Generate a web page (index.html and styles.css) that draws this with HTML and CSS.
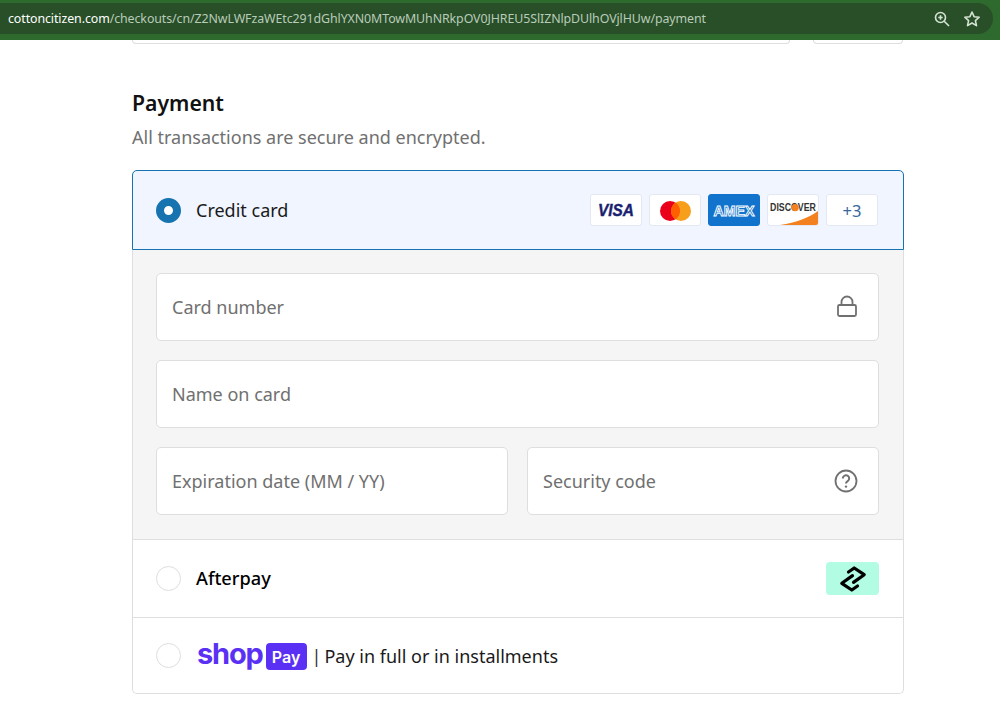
FILE: index.html
```html
<!DOCTYPE html>
<html lang="en">
<head>
    <title>Payment</title>
    <meta charset="utf-8">
    <link rel="stylesheet" href="styles.css">
</head>
<body>
    <header class="browser">
        <div class="urlbar">
            <p class="url"><span class="domain">cottoncitizen.com</span>/checkouts/cn/Z2NwLWFzaWEtc291dGhlYXN0MTowMUhNRkpOV0JHREU5SlIZNlpDUlhOVjlHUw/payment</p>
            <svg class="barIcon" width="18" height="18" viewBox="0 0 18 18" fill="none" stroke="#d5e3d5" stroke-width="1.6">
                <circle cx="7.5" cy="7.5" r="5"/>
                <path d="M11.2 11.2L16 16M5.3 7.5h4.4M7.5 5.3v4.4"/>
            </svg>
            <svg class="barIcon" width="18" height="18" viewBox="0 0 18 18" fill="none" stroke="#d5e3d5" stroke-width="1.6" stroke-linejoin="round">
                <path d="M9 2l2.1 4.7 5.1.5-3.8 3.4 1.1 5L9 13l-4.5 2.6 1.1-5-3.8-3.4 5.1-.5z"/>
            </svg>
        </div>
    </header>

    <main class="page">
        <div class="leftover">
            <div class="leftoverField"></div>
            <div class="leftoverBtn"></div>
        </div>

        <h2 class="title">Payment</h2>
        <p class="subtitle">All transactions are secure and encrypted.</p>

        <section class="methods">
            <div class="method selected">
                <span class="radio on"></span>
                <span class="methodName">Credit card</span>
                <div class="cards">
                    <div class="card">
                        <svg width="50" height="30" viewBox="0 0 50 30"><text x="25" y="21" class="visaText" text-anchor="middle" textLength="36" lengthAdjust="spacingAndGlyphs">VISA</text></svg>
                    </div>
                    <div class="card">
                        <svg width="50" height="30" viewBox="0 0 50 30">
                            <circle cx="20" cy="16" r="10" fill="#eb001b"/>
                            <circle cx="31" cy="16" r="10" fill="#f79e1b"/>
                            <path d="M25.5 7.6a10 10 0 0 1 0 16.8a10 10 0 0 1 0-16.8z" fill="#ff5f00"/>
                        </svg>
                    </div>
                    <div class="card amex">
                        <svg width="50" height="30" viewBox="0 0 50 30"><text x="25" y="20.5" class="amexText" text-anchor="middle" textLength="41" lengthAdjust="spacingAndGlyphs">AMEX</text></svg>
                    </div>
                    <div class="card">
                        <svg width="50" height="30" viewBox="0 0 50 30">
                            <path d="M12 30C28 28 42 22 50 16v14z" fill="#f48120"/>
                            <text class="discText" text-anchor="middle" transform="translate(25 16) scale(1 1.15)">DISCOVER</text>
                            <circle cx="27.2" cy="12.6" r="3.6" fill="#f48120"/>
                        </svg>
                    </div>
                    <div class="card more">+3</div>
                </div>
            </div>

            <div class="fields">
                <div class="field">
                    <span>Card number</span>
                    <svg width="22" height="24" viewBox="0 0 22 24" fill="none" stroke="#707070" stroke-width="1.8">
                        <rect x="2" y="10" width="18" height="11" rx="1.5"/>
                        <path d="M5.5 10V7a5.5 5.5 0 0 1 11 0v3"/>
                    </svg>
                </div>
                <div class="field"><span>Name on card</span></div>
                <div class="fieldRow">
                    <div class="field"><span>Expiration date (MM / YY)</span></div>
                    <div class="field">
                        <span>Security code</span>
                        <svg width="24" height="24" viewBox="0 0 24 24" fill="none" stroke="#707070" stroke-width="1.8">
                            <circle cx="12" cy="12" r="10.5"/>
                            <path d="M8.8 9.5a3.2 3.2 0 1 1 4.9 2.7c-1.1.7-1.7 1.2-1.7 2.4" stroke-width="2"/>
                            <circle cx="12" cy="17.6" r="1.2" fill="#707070" stroke="none"/>
                        </svg>
                    </div>
                </div>
            </div>

            <div class="method">
                <span class="radio"></span>
                <span class="methodName strong">Afterpay</span>
                <div class="afterpay">
                    <svg width="30" height="26" viewBox="0 0 30 26" fill="none" stroke="#000" stroke-width="3.2" stroke-linejoin="round" stroke-linecap="round">
                        <path d="M10.5 6L16.2 2L26.2 8.7L15.5 16.4"/>
                        <path d="M19.5 20L13.8 24L3.8 17.3L14.5 9.6"/>
                    </svg>
                </div>
            </div>

            <div class="method last">
                <span class="radio"></span>
                <span class="shopWord">shop</span>
                <span class="payBadge">Pay</span>
                <span class="sep">|</span>
                <span class="shopText">Pay in full or in installments</span>
            </div>
        </section>
    </main>
</body>
</html>
```

FILE: styles.css
```css
* {
    box-sizing: border-box;
    font-family: "Noto Sans", "Open Sans", sans-serif;
}
html, body {
    height: 100%;
}
body {
    margin: 0px;
    padding: 0px;
    background: #fff;
    color: #111;
    overflow: hidden;
}

/* browser bar */
.browser {
    height: 40px;
    padding: 3px 7px 6px 0px;
    background: #2e6a2e;
}
.urlbar {
    height: 31px;
    padding: 0px 12px 0px 8px;
    display: flex;
    align-items: center;
    gap: 12px;
    background: #284f28;
    border-radius: 0px 16px 16px 0px;
}
.url {
    flex: 1;
    margin: 0px;
    font-size: 12.4px;
    letter-spacing: -0.09px;
    color: #b9cbb9;
    white-space: nowrap;
}
.domain {
    color: #fff;
}

/* page */
.page {
    width: 772px;
    margin-left: 132px;
}
.leftover {
    display: flex;
    justify-content: space-between;
    height: 4px;
}
.leftoverField {
    width: 658px;
    border: solid 1px #dedede;
    border-top: 0px;
    border-radius: 0px 0px 5px 5px;
}
.leftoverBtn {
    width: 90px;
    margin-right: 1px;
    border: solid 1px #dedede;
    border-top: 0px;
    border-radius: 0px 0px 5px 5px;
}
.title {
    margin: 44px 0px 0px 0px;
    font-size: 21.2px;
    line-height: 30px;
    font-weight: 600;
    color: #111;
}
.subtitle {
    margin: 5px 0px 0px 0px;
    font-size: 18px;
    line-height: 28px;
    color: #707070;
}

/* payment methods */
.methods {
    margin-top: 19px;
    border: solid 1px #dedede;
    border-top: 0px;
    border-radius: 5px;
}
.method {
    display: flex;
    align-items: center;
    height: 78px;
    padding: 0px 24px 0px 23px;
    border-top: solid 1px #dedede;
}
.method.selected {
    height: 80px;
    margin: 0px -1px;
    background: #f0f5ff;
    border: solid 1px #1773b0;
    border-radius: 5px 5px 0px 0px;
}
.method.last {
    height: 76px;
}
.radio {
    width: 25px;
    height: 25px;
    margin-right: 15px;
    flex: none;
    border: solid 1px #dedede;
    border-radius: 50%;
    background: #fff;
}
.radio.on {
    border: solid 8px #1773b0;
}
.methodName {
    font-size: 18px;
    color: #1a1a1a;
}
.methodName.strong {
    margin-top: -2px;
    font-size: 18.2px;
    font-weight: 500;
    color: #000;
}

/* card logos */
.cards {
    margin-left: auto;
    margin-right: 1px;
    display: flex;
    gap: 7px;
}
.card {
    width: 52px;
    height: 32px;
    border: solid 1px #e4e8f0;
    border-radius: 3px;
    background: #fff;
    overflow: hidden;
}
.card svg {
    display: block;
}
.card.amex {
    background: #1173cc;
    border-color: #1173cc;
}
.card.more {
    display: flex;
    align-items: center;
    justify-content: center;
    font-size: 16.5px;
    color: #37689c;
}
.visaText {
    font-family: "Liberation Sans", sans-serif;
    font-size: 17px;
    font-weight: 700;
    font-style: italic;
    fill: #1a1f71;
    stroke: #1a1f71;
    stroke-width: 0.4px;
}
.amexText {
    font-family: "Liberation Sans", sans-serif;
    font-size: 14px;
    font-weight: 700;
    fill: #1173cc;
    stroke: #fff;
    stroke-width: 0.9px;
}
.discText {
    font-family: "Liberation Sans", sans-serif;
    font-size: 8.8px;
    font-weight: 700;
    fill: #333;
}

/* card form */
.fields {
    padding: 23px 24px 24px 23px;
    display: flex;
    flex-direction: column;
    gap: 19px;
    background: #f5f5f5;
}
.fieldRow {
    display: flex;
    gap: 19px;
}
.fieldRow .field {
    flex: 1;
}
.field {
    height: 68px;
    padding: 0px 20px 0px 15px;
    display: flex;
    align-items: center;
    justify-content: space-between;
    background: #fff;
    border: solid 1px #dedede;
    border-radius: 5px;
    font-size: 18px;
    color: #707070;
}

/* afterpay */
.afterpay {
    width: 53px;
    height: 33px;
    margin-left: auto;
    display: flex;
    align-items: center;
    justify-content: center;
    background: #b2fce4;
    border-radius: 4px;
}

/* shop pay */
.shopWord {
    margin: -4px 0px 0px 1px;
    font-family: "Inter", sans-serif;
    font-size: 29px;
    font-weight: 700;
    letter-spacing: -1.2px;
    color: #5a31f4;
}
.payBadge {
    margin: 2px 0px 0px 3px;
    width: 41px;
    height: 27px;
    display: flex;
    align-items: center;
    justify-content: center;
    background: #5a31f4;
    border-radius: 4px;
    color: #fff;
    font-family: "Inter", sans-serif;
    font-size: 16px;
    font-weight: 600;
}
.sep {
    margin: 0px 3px 0px 5px;
    font-size: 18px;
    color: #333;
}
.shopText {
    font-size: 18px;
    color: #1a1a1a;
}
```
